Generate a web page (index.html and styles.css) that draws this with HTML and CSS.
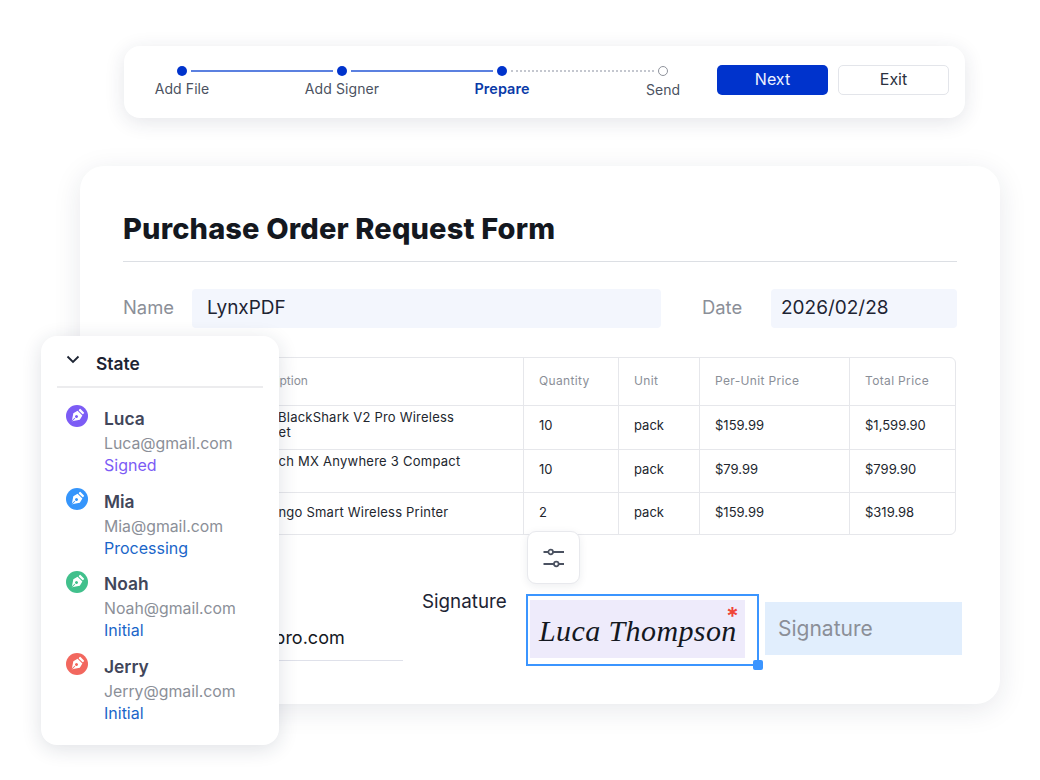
FILE: index.html
```html
<!DOCTYPE html>
<html lang="en">
<head>
<meta charset="utf-8">
<title>Purchase Order Request Form</title>
<link rel="stylesheet" href="styles.css">
</head>
<body>
<svg class="defs" width="0" height="0" aria-hidden="true">
  <symbol id="nib" viewBox="0 0 22 22">
    <g transform="rotate(45 11 11)" fill="#fff">
      <rect x="8" y="3.600" width="6" height="2.200" rx=".6"/>
      <path fill-rule="evenodd" d="M7.600 6.800H14.400L15.600 11.600L11 18.400L6.400 11.600ZM11 10.200a1.500 1.500 0 1 0 0 3a1.500 1.500 0 1 0 0-3ZM10.600 13.900h.8v4h-.8Z"/>
    </g>
  </symbol>
</svg>

<header class="stepbar">
  <div class="stepper">
    <span class="dot done"></span><span class="line solid"></span>
    <span class="dot done"></span><span class="line solid"></span>
    <span class="dot done"></span><span class="line dotted"></span>
    <span class="dot open"></span>
    <span class="lbl"><span>Add File</span></span><span></span>
    <span class="lbl"><span>Add Signer</span></span><span></span>
    <span class="lbl cur"><span>Prepare</span></span><span></span>
    <span class="lbl low"><span>Send</span></span>
  </div>
  <div class="actions">
    <button class="btn primary">Next</button>
    <button class="btn ghost">Exit</button>
  </div>
</header>

<main class="form">
  <h1 class="title">Purchase Order Request Form</h1>
  <div class="fields">
    <span class="flabel name-l">Name</span>
    <div class="input name-i">LynxPDF</div>
    <span class="flabel date-l">Date</span>
    <div class="input date-i">2026/02/28</div>
  </div>
  <table class="items">
    <colgroup><col class="c1"><col class="c2"><col class="c3"><col class="c4"><col class="c5"></colgroup>
    <thead>
      <tr class="r0"><th class="desc">Description</th><th>Quantity</th><th>Unit</th><th>Per-Unit Price</th><th>Total Price</th></tr>
    </thead>
    <tbody>
      <tr class="r1"><td class="desc">Razer BlackShark V2 Pro Wireless Headset</td><td>10</td><td>pack</td><td>$159.99</td><td>$1,599.90</td></tr>
      <tr class="r2"><td class="desc">Logitech MX Anywhere 3 Compact Mice</td><td>10</td><td>pack</td><td>$79.99</td><td>$799.90</td></tr>
      <tr class="r3"><td class="desc">HP Tango Smart Wireless Printer</td><td>2</td><td>pack</td><td>$159.99</td><td>$319.98</td></tr>
    </tbody>
  </table>
  <div class="bottom">
    <div class="email">sales@lynxpro.com</div>
    <span class="sig-label">Signature</span>
    <div class="sig-box">
      <div class="sig-fill"><span class="script">Luca Thompson</span><span class="req">*</span></div>
      <span class="handle"></span>
    </div>
    <div class="sig-empty">Signature</div>
  </div>
  <div class="tool">
    <svg width="26" height="22" viewBox="0 0 26 22" fill="none" stroke="#4b5261" stroke-width="2">
      <path d="M2.500 5H7.500M12 5H23"/><circle cx="9.700" cy="5" r="2.300" stroke-width="1.700"/>
      <path d="M2.500 17H13M17.700 17H23"/><circle cx="15.300" cy="17" r="2.300" stroke-width="1.700"/>
    </svg>
  </div>
</main>

<aside class="panel">
  <div class="phead">
    <svg class="chev" width="16" height="10" viewBox="0 0 16 10" fill="none" stroke="#1d2433" stroke-width="1.800"><path d="M2.500 1.500L8 7l5.500-5.500"/></svg>
    <span>State</span>
  </div>
  <ul class="people">
    <li class="person"><span class="avatar violet"><svg width="22" height="22"><use href="#nib"/></svg></span><div class="who"><b>Luca</b><span class="mail">Luca@gmail.com</span><span class="st signed">Signed</span></div></li>
    <li class="person"><span class="avatar blue"><svg width="22" height="22"><use href="#nib"/></svg></span><div class="who"><b>Mia</b><span class="mail">Mia@gmail.com</span><span class="st">Processing</span></div></li>
    <li class="person"><span class="avatar green"><svg width="22" height="22"><use href="#nib"/></svg></span><div class="who"><b>Noah</b><span class="mail">Noah@gmail.com</span><span class="st">Initial</span></div></li>
    <li class="person"><span class="avatar red"><svg width="22" height="22"><use href="#nib"/></svg></span><div class="who"><b>Jerry</b><span class="mail">Jerry@gmail.com</span><span class="st">Initial</span></div></li>
  </ul>
</aside>
</body>
</html>
```
FILE: styles.css
```css
* { box-sizing: border-box; }
html, body { margin: 0; padding: 0; }
body { width: 1040px; height: 780px; overflow: hidden; background: #fff; position: relative; font-family: Inter, "Liberation Sans", sans-serif; color: #1d2433; }
.defs { position: absolute; }

/* free-canvas cards */
.stepbar { position: absolute; left: 124px; top: 46px; width: 841px; height: 72px; background: #fff; border-radius: 16px; box-shadow: 0 4px 20px rgba(30,40,70,.12); display: flex; justify-content: space-between; align-items: flex-start; padding: 19px 16px 0 53px; }
.stepper { display: grid; grid-template-columns: 10px 150px 10px 150px 10px 151px 10px; grid-template-rows: 10px auto; row-gap: 4px; padding-top: 1px; }
.dot { width: 10px; height: 10px; border-radius: 50%; }
.dot.done { background: #0033cc; }
.dot.open { border: 1.500px solid #8f939c; background: #fff; }
.line { align-self: center; margin: 0 4px; }
.line.solid { height: 2px; background: #5b80e0; }
.line.dotted { border-top: 2px dotted #c4c7cf; }
.lbl { display: flex; justify-content: center; width: 10px; font-size: 14px; letter-spacing: .1px; line-height: 18px; color: #4b5261; white-space: nowrap; }
.lbl.cur { color: #0a3aa8; font-weight: 600; font-size: 14.400px; }
.lbl.low { margin-top: 1px; letter-spacing: 0; }
.actions { display: flex; gap: 10px; }
.btn { width: 111px; height: 30px; border-radius: 5px; font: 400 16px Inter, sans-serif; padding: 0 0 2px; }
.btn.primary { background: #0033cc; color: #eef2ff; border: 0; }
.btn.ghost { background: #fff; color: #2b3140; border: 1px solid #e3e5ea; }

.form { position: absolute; left: 80px; top: 166px; width: 920px; height: 538px; background: #fff; border-radius: 24px; box-shadow: 0 6px 28px rgba(30,40,70,.1); padding: 43px 43px 0; }
.title { margin: 0; font-size: 29px; letter-spacing: .15px; line-height: 39px; font-weight: 800; color: #14181f; border-bottom: 1px solid #dcdfe4; height: 53px; width: 834px; white-space: nowrap; }
.fields { display: flex; align-items: center; height: 39px; margin-top: 27px; width: 834px; }
.flabel { font-size: 18.400px; line-height: 22px; color: #8b8f98; padding-bottom: 4px; }
.name-l { width: 69px; }
.input { height: 39px; line-height: 37px; background: #f3f6fd; border-radius: 4px; font-size: 19px; color: #1d2433; }
.name-i { width: 469px; padding-left: 15px; }
.date-l { width: 69px; margin-left: 41px; }
.date-i { width: 186px; padding-left: 10px; }

.items { margin-top: 29px; width: 833px; table-layout: fixed; border-collapse: separate; border-spacing: 0; border: 1px solid #e6e7eb; border-radius: 6px; font-size: 13px; color: #22262e; }
.c1 { width: 399px; } .c2 { width: 95px; } .c3 { width: 81px; } .c4 { width: 150px; } .c5 { width: auto; }
.items th, .items td { padding: 0 15px; border-left: 1px solid #e6e7eb; border-top: 1px solid #e6e7eb; text-align: left; font-weight: 400; }
.items td { padding-bottom: 5px; }
.items th { font-size: 12px; letter-spacing: .35px; color: #8b8f98; border-top: 0; padding-bottom: 2px; }
.items th:first-child, .items td:first-child { border-left: 0; }
.items .desc { padding-left: 114px; padding-right: 58px; line-height: 15px; letter-spacing: .22px; }
.items th.desc { padding-left: 119px; letter-spacing: 0; }
.items .r2 .desc { padding-left: 115px; letter-spacing: .25px; }
.items .r3 .desc { padding-left: 117px; }
.items .r3 td { padding-bottom: 3px; }
.r0 { height: 47px; } .r1 { height: 44px; } .r2 { height: 43px; } .r3 { height: 42px; }

.bottom { position: relative; height: 130px; }
.email { position: absolute; left: 43px; top: 81px; width: 237px; height: 45px; padding-left: 12px; line-height: 44px; font-size: 18px; color: #14181f; border-bottom: 1px solid #dfe1ea; white-space: nowrap; }
.sig-label { position: absolute; left: 299px; top: 55px; font-size: 18.800px; color: #1d2433; }
.sig-box { position: absolute; left: 403px; top: 59px; width: 233px; height: 72px; border: 2px solid #3b95ff; padding: 4px 12px 6px 2px; }
.sig-fill { height: 100%; background: #eeebfb; position: relative; padding-left: 9px; }
.script { font: italic 30px/62px "Liberation Serif", serif; letter-spacing: .4px; color: #14181f; white-space: nowrap; }
.req { position: absolute; right: 6px; top: 3px; color: #f04438; font-size: 24px; line-height: 28px; font-weight: 600; }
.handle { position: absolute; right: -6px; bottom: -6px; width: 10px; height: 10px; border-radius: 2px; background: #3b95ff; }
.sig-empty { position: absolute; left: 642px; top: 67px; width: 197px; height: 53px; background: #e1eefd; padding-left: 13px; line-height: 54px; font-size: 21px; color: #8b8f98; }
.tool { position: absolute; left: 447px; top: 365px; width: 53px; height: 53px; background: #fff; border: 1px solid #e8e9ed; border-radius: 9px; box-shadow: 0 2px 8px rgba(30,40,70,.08); display: flex; align-items: center; justify-content: center; }

.panel { position: absolute; left: 41px; top: 336px; width: 238px; height: 409px; background: #fff; border-radius: 16px; box-shadow: 0 4px 20px rgba(30,40,70,.14); padding: 0 16px; }
.phead { display: flex; align-items: center; height: 52px; border-bottom: 2px solid #ececee; padding: 4px 0 0 8px; gap: 15px; font-size: 17.400px; font-weight: 600; color: #1d2433; }
.chev { margin-top: -6px; }
.people { list-style: none; margin: 16.400px 0 0; padding: 0 0 0 9px; display: flex; flex-direction: column; gap: 0; }
.person { display: flex; height: 82.700px; gap: 16px; }
.avatar { width: 22px; height: 22px; border-radius: 50%; flex: none; margin-top: 1px; }
.avatar svg { display: block; }
.violet { background: #7c5cf5; } .blue { background: #3595fb; } .green { background: #41c08c; } .red { background: #f2675e; }
.who { display: flex; flex-direction: column; padding-top: 2.600px; }
.who b { font-size: 17.400px; line-height: 24px; font-weight: 600; color: #41465a; margin-bottom: 2px; }
.mail { font-size: 15.800px; line-height: 22px; color: #8b8f98; }
.st { font-size: 16px; line-height: 22px; color: #1a66c9; margin-top: -1px; }
.st.signed { color: #7c5cf5; }
```
